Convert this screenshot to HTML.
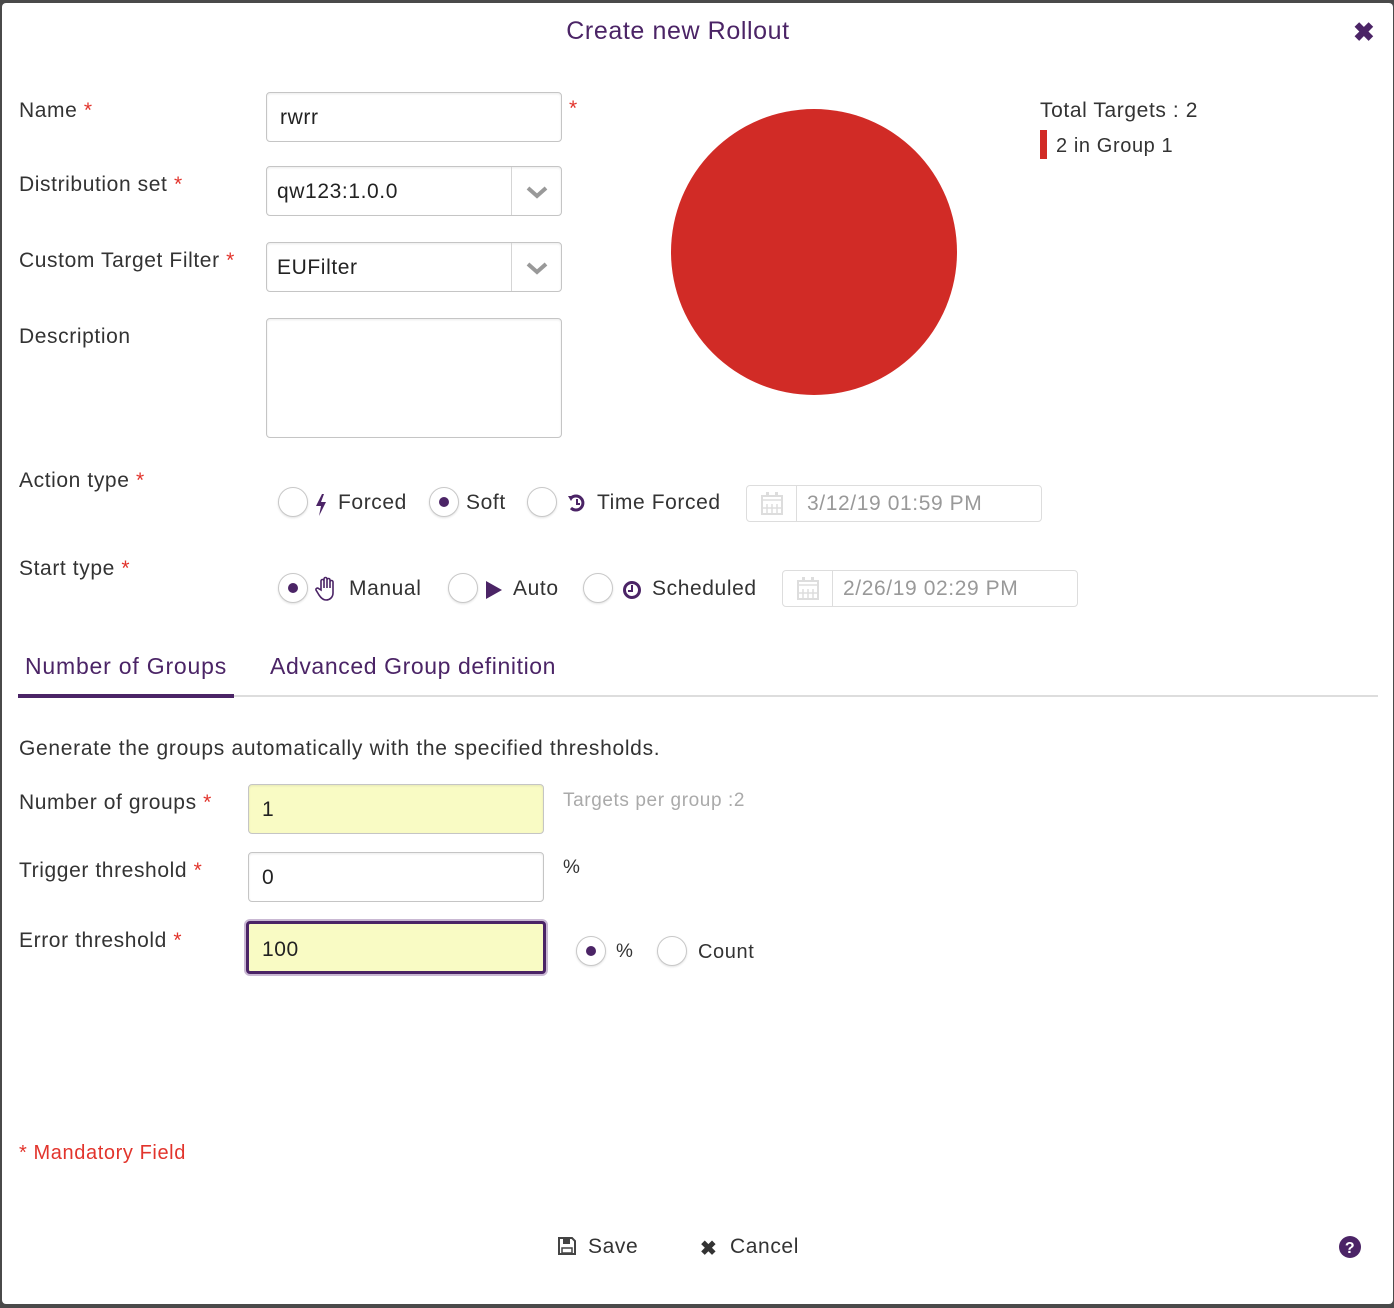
<!DOCTYPE html>
<html><head><meta charset="utf-8"><style>
*{box-sizing:border-box;margin:0;padding:0}
body{width:1394px;height:1308px;background:#4a4a4a;font-family:"Liberation Sans",sans-serif;color:#333;position:relative;overflow:hidden;letter-spacing:.6px}
#d{position:absolute;left:2px;top:3px;width:1391px;height:1301px;background:#fff;border-radius:4px}
.a{position:absolute;white-space:nowrap}
.l{font-size:21px;color:#333}
.s{color:#e2342c}
.in{position:absolute;border:1px solid #c5c5c5;border-radius:4px;background:#fff;font-size:21px;padding-left:13px;color:#222;box-shadow:inset 0 1px 2px rgba(0,0,0,.08)}
.dd{position:absolute;right:0;top:0;bottom:0;width:50px;border-left:1px solid #d5d5d5}
.r{position:absolute;width:30px;height:30px;border:1px solid #c8c8c8;border-radius:50%;background:#fff;box-shadow:0 1px 2px rgba(0,0,0,.12)}
.r.on::after{content:"";position:absolute;left:9px;top:9px;width:10px;height:10px;border-radius:50%;background:#4b2466}
.dt{position:absolute;border:1px solid #ddd;border-radius:4px;height:37px;color:#999;font-size:21px}
.dt span{position:absolute;left:60px;top:6px}
.dt i{position:absolute;left:0;top:0;bottom:0;width:50px;border-right:1px solid #ddd}
.p{color:#4b2466}
</style></head><body><div id="d">
<div class="a p" style="left:0;width:1352px;text-align:center;top:14px;font-size:25px">Create new Rollout</div>
<div class="a p" style="left:1351px;top:14px;font-size:26px;font-weight:bold">✖</div>

<div class="a l" style="left:17px;top:96px">Name <span class="s">*</span></div>
<div class="in" style="left:264px;top:89px;width:296px;height:50px;padding-top:13px">rwrr</div>
<div class="a s" style="left:567px;top:94px;font-size:21px">*</div>

<div class="a l" style="left:17px;top:170px">Distribution set <span class="s">*</span></div>
<div class="in" style="left:264px;top:163px;width:296px;height:50px;padding-top:13px;padding-left:10px">qw123:1.0.0<div class="dd"><svg width="50" height="48" viewBox="0 0 50 48"><path d="M16 21l9 8 9-8" fill="none" stroke="#999" stroke-width="4"/></svg></div></div>

<div class="a l" style="left:17px;top:246px">Custom Target Filter <span class="s">*</span></div>
<div class="in" style="left:264px;top:239px;width:296px;height:50px;padding-top:13px;padding-left:10px">EUFilter<div class="dd"><svg width="50" height="48" viewBox="0 0 50 48"><path d="M16 21l9 8 9-8" fill="none" stroke="#999" stroke-width="4"/></svg></div></div>

<div class="a l" style="left:17px;top:322px">Description</div>
<div class="in" style="left:264px;top:315px;width:296px;height:120px"></div>

<svg class="a" style="left:668px;top:105px" width="288" height="288"><circle cx="144" cy="144" r="143" fill="#d12b26"/></svg>
<div class="a l" style="left:1038px;top:96px">Total Targets : 2</div>
<div class="a" style="left:1038px;top:127px;width:7px;height:29px;background:#d12b26"></div>
<div class="a l" style="left:1054px;top:132px;font-size:20px">2 in Group 1</div>

<div class="a l" style="left:17px;top:466px">Action type <span class="s">*</span></div>
<div class="r" style="left:276px;top:484px"></div>
<svg class="a" style="left:312px;top:490px" width="14" height="24"><path d="M8 1L2 13h5l-2 10 7-14H7l3-8z" fill="#4b2466"/></svg>
<div class="a l" style="left:336px;top:488px">Forced</div>
<div class="r on" style="left:427px;top:484px"></div>
<div class="a l" style="left:464px;top:488px">Soft</div>
<div class="r" style="left:525px;top:484px"></div>
<svg class="a" style="left:565px;top:490px" width="20" height="20" viewBox="0 0 20 20"><path d="M4 5A7 7 0 1 1 4 15" fill="none" stroke="#4b2466" stroke-width="3"/><path d="M1 3l6 0-3 5z" fill="#4b2466"/><path d="M10 6v5h3" fill="none" stroke="#4b2466" stroke-width="2"/></svg>
<div class="a l" style="left:595px;top:488px">Time Forced</div>
<div class="dt" style="left:744px;top:482px;width:296px"><i><svg width="50" height="37"><rect x="15" y="10" width="20" height="18" fill="none" stroke="#ddd" stroke-width="2"/><path d="M15 14h20M20 18v10M25 18v10M30 18v10M15 22h20" stroke="#ddd" stroke-width="1.5"/><rect x="19" y="6" width="3" height="5" fill="#ddd"/><rect x="28" y="6" width="3" height="5" fill="#ddd"/></svg></i><span>3/12/19 01:59 PM</span></div>

<div class="a l" style="left:17px;top:554px">Start type <span class="s">*</span></div>
<div class="r on" style="left:276px;top:570px"></div>
<svg class="a" style="left:313px;top:573px" width="24" height="26" viewBox="0 0 24 26"><path d="M6 14V5a1.5 1.5 0 0 1 3 0v7V3a1.5 1.5 0 0 1 3 0v9V4a1.5 1.5 0 0 1 3 0v8V6a1.5 1.5 0 0 1 3 0v11c0 4-3 7-7 7-3 0-5-2-7-5l-3-5a1.5 1.5 0 0 1 2.5-1.5z" fill="none" stroke="#4b2466" stroke-width="1.6"/></svg>
<div class="a l" style="left:347px;top:574px">Manual</div>
<div class="r" style="left:446px;top:570px"></div>
<svg class="a" style="left:483px;top:577px" width="18" height="20"><path d="M1 1L17 10L1 19z" fill="#4b2466"/></svg>
<div class="a l" style="left:511px;top:574px">Auto</div>
<div class="r" style="left:581px;top:570px"></div>
<svg class="a" style="left:620px;top:577px" width="20" height="20"><circle cx="10" cy="10" r="7.5" fill="none" stroke="#4b2466" stroke-width="3"/><path d="M10 5v6H6" fill="none" stroke="#4b2466" stroke-width="2"/></svg>
<div class="a l" style="left:650px;top:574px">Scheduled</div>
<div class="dt" style="left:780px;top:567px;width:296px"><i><svg width="50" height="37"><rect x="15" y="10" width="20" height="18" fill="none" stroke="#ddd" stroke-width="2"/><path d="M15 14h20M20 18v10M25 18v10M30 18v10M15 22h20" stroke="#ddd" stroke-width="1.5"/><rect x="19" y="6" width="3" height="5" fill="#ddd"/><rect x="28" y="6" width="3" height="5" fill="#ddd"/></svg></i><span>2/26/19 02:29 PM</span></div>

<div class="a p" style="left:23px;top:650px;font-size:23px;letter-spacing:.8px">Number of Groups</div>
<div class="a p" style="left:268px;top:650px;font-size:23px;letter-spacing:.6px">Advanced Group definition</div>
<div class="a" style="left:16px;top:692px;width:1360px;height:2px;background:#ddd"></div>
<div class="a" style="left:16px;top:691px;width:216px;height:4px;background:#4b2466"></div>

<div class="a l" style="left:17px;top:734px;letter-spacing:.7px">Generate the groups automatically with the specified thresholds.</div>
<div class="a l" style="left:17px;top:788px">Number of groups <span class="s">*</span></div>
<div class="in" style="left:246px;top:781px;width:296px;height:50px;padding-top:13px;background:#f9fbc4">1</div>
<div class="a" style="left:561px;top:787px;font-size:19px;color:#aaa">Targets per group :2</div>
<div class="a l" style="left:17px;top:856px">Trigger threshold <span class="s">*</span></div>
<div class="in" style="left:246px;top:849px;width:296px;height:50px;padding-top:13px">0</div>
<div class="a l" style="left:561px;top:854px;font-size:19px">%</div>
<div class="a l" style="left:17px;top:926px">Error threshold <span class="s">*</span></div>
<div class="in" style="left:244px;top:918px;width:300px;height:53px;padding-top:14px;background:#f9fbc4;border:3px solid #4b2466;box-shadow:0 0 0 2px #c9b8d3">100</div>
<div class="r on" style="left:574px;top:933px"></div>
<div class="a l" style="left:614px;top:938px;font-size:19px">%</div>
<div class="r" style="left:655px;top:933px"></div>
<div class="a l" style="left:696px;top:938px;font-size:20px">Count</div>

<div class="a s" style="left:17px;top:1139px;font-size:20px">* Mandatory Field</div>

<svg class="a" style="left:555px;top:1233px" width="20" height="20"><path d="M2 2h13l3 3v13H2z" fill="none" stroke="#444" stroke-width="2"/><rect x="6" y="3" width="7" height="5" fill="#444"/><rect x="5" y="12" width="10" height="5" fill="none" stroke="#444" stroke-width="1.5"/></svg>
<div class="a l" style="left:586px;top:1232px">Save</div>
<div class="a" style="left:698px;top:1233px;font-size:20px;color:#333;font-weight:bold">✖</div>
<div class="a l" style="left:728px;top:1232px">Cancel</div>
<svg class="a" style="left:1336px;top:1232px" width="24" height="24"><circle cx="12" cy="12" r="11" fill="#4b2466"/><text x="12" y="18" font-family="Liberation Sans" font-weight="bold" font-size="16" fill="#fff" text-anchor="middle">?</text></svg>
</div></body></html>
